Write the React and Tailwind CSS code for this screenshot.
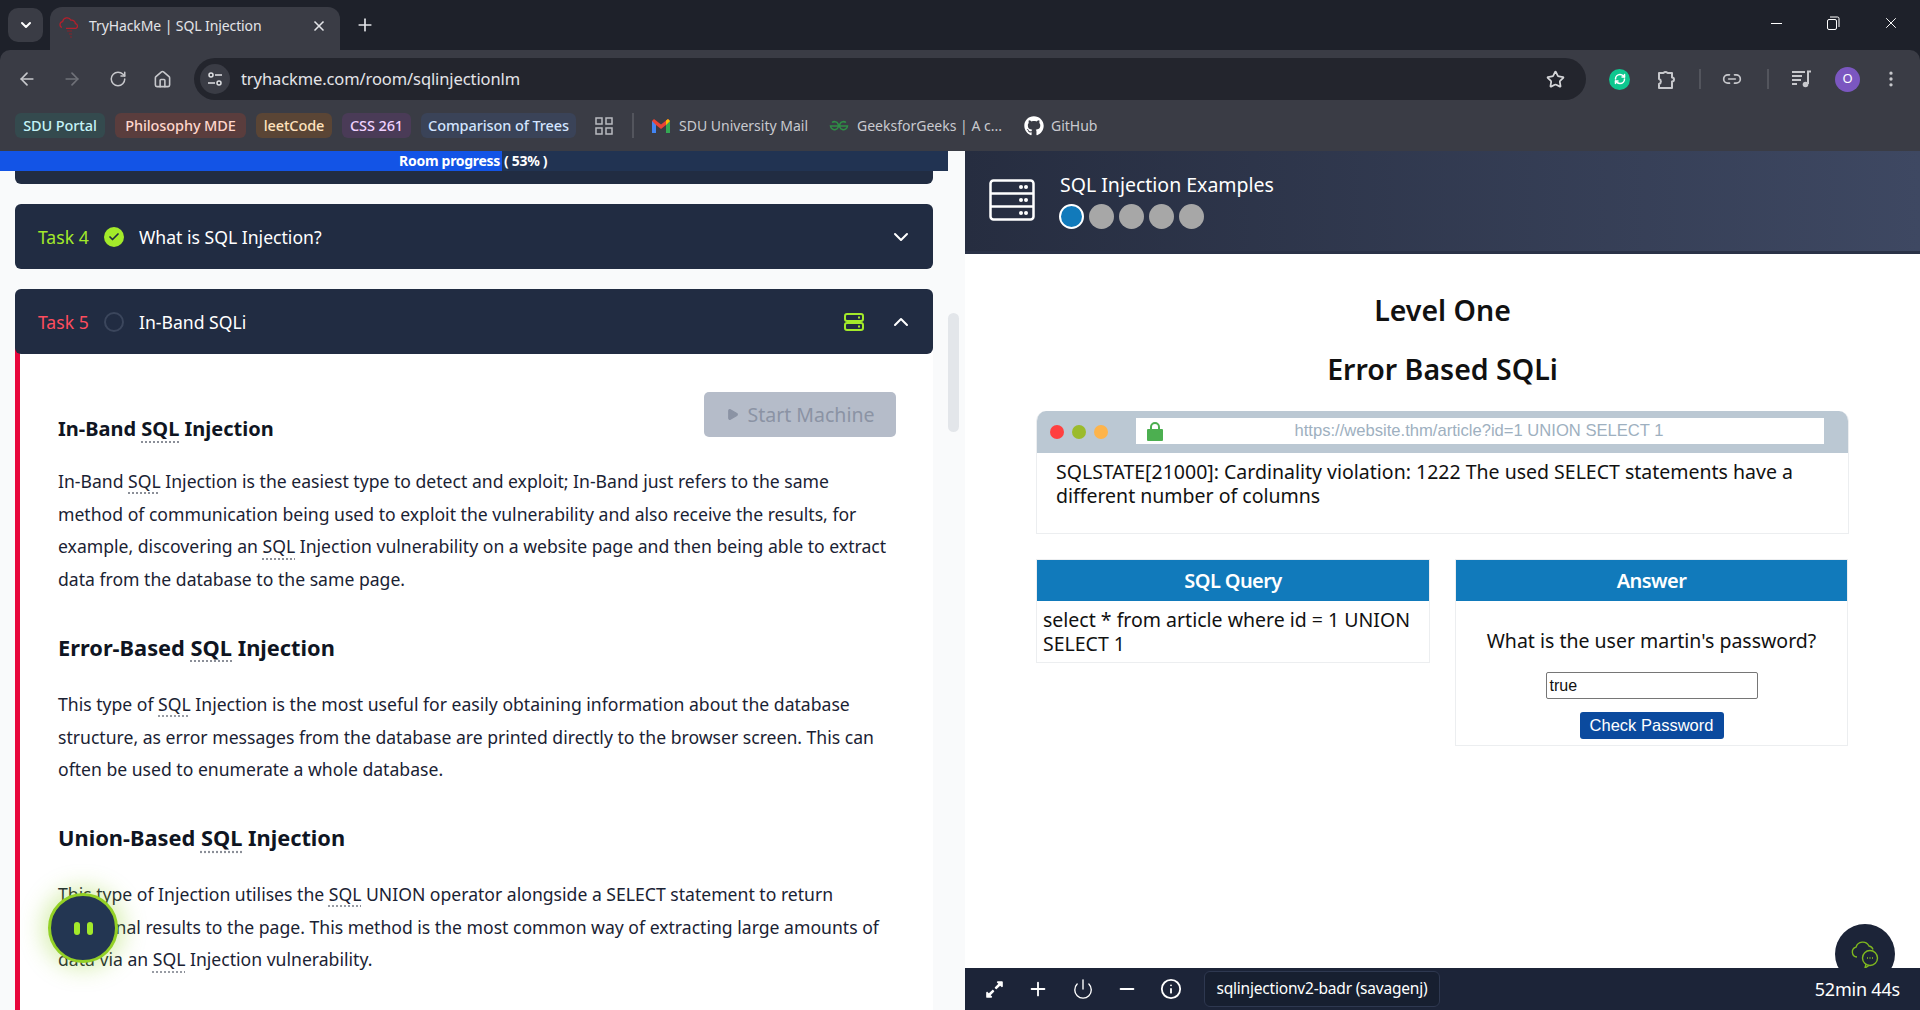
import React from 'react';
import {
    ArrowLeft, ArrowRight, RotateCw, RefreshCw, House, Star, Link2, EllipsisVertical,
    Minus, Plus, X, ChevronDown, ChevronUp, Power, Info, Check, Play
} from 'lucide-react';
import { FaGithub, FaExpandAlt } from 'react-icons/fa';

const BOOKMARK_CHIPS = [
    { label: 'SDU Portal', className: 'w-[90px] bg-[#344a4e] text-[#c4f3f7]' },
    { label: 'Philosophy MDE', className: 'w-[131px] bg-[#5a3d3d] text-[#ffd6cc]' },
    { label: 'leetCode', className: 'w-[76px] bg-[#5a4535] text-[#ffe2bd]' },
    { label: 'CSS 261', className: 'w-[69px] bg-[#4a3b57] text-[#f0d2ff]' },
    { label: 'Comparison of Trees', className: 'w-[155px] bg-[#3a4358] text-[#d3e5ff]' },
];

const Sql = () => (
    <span className="underline decoration-dotted decoration-[#8b8f98] underline-offset-[5px]">SQL</span>
);

const TaskHeader = ({ label, labelClass, title, done, open }) => (
    <div className="relative z-10 mx-[15px] flex h-[65px] w-[918px] items-center rounded-[6px] bg-[#212c42] pl-[23px] pr-[20px]">
        <span className={`w-[66px] pt-[2px] text-[17.600px] ${labelClass}`}>{label}</span>
        {done ? (
            <span className="flex h-5 w-5 items-center justify-center rounded-full bg-[#a3ea2a]">
                <Check className="h-3 w-3 text-[#212c42]" strokeWidth={3.5} />
            </span>
        ) : (
            <span className="h-5 w-5 rounded-full border-2 border-[#3b465c]" />
        )}
        <span className="ml-[15px] flex-1 pt-[2px] text-[17.600px] text-white">{title}</span>
        {open && (
            <svg width="22" height="20" viewBox="0 0 22 20" fill="none" stroke="#a3ea2a" strokeWidth="2" className="mr-[24px]">
                <rect x="2" y="2" width="18" height="7" rx="2" />
                <rect x="2" y="11" width="18" height="7" rx="2" />
                <path d="M15 5.500h2M15 14.500h2" />
            </svg>
        )}
        {open ? <ChevronUp className="h-6 w-6 text-white" /> : <ChevronDown className="h-6 w-6 text-white" />}
    </div>
);

const Heading = ({ children, first }) => (
    <h3 className={`font-bold leading-[30px] text-[#0f1522] ${first ? 'mb-[21px] text-[20px]' : 'mb-[25px] mt-[37px] text-[21.800px]'}`}>
        {children}
    </h3>
);

const Para = ({ children }) => <p className="text-[17.600px] leading-[32.7px] text-[#1a2233]">{children}</p>;

const ChromeTopBar = () => (
    <div className="flex h-[50px] shrink-0 items-end bg-[#1e212a] pl-2">
        <div className="mb-2 flex h-[34px] w-[35px] items-center justify-center rounded-[10px] bg-[#3a3c45]">
            <ChevronDown className="h-4 w-4 text-white" strokeWidth={3} />
        </div>
        <div className="ml-[7px] flex h-[43px] w-[290px] items-center rounded-t-[12px] bg-[#3a3c45] pb-[6px] pl-[8px] pr-[13px]">
            <svg width="22" height="24" viewBox="0 0 22 24" fill="none" stroke="#b3202c" strokeWidth="1.300">
                <path d="M4 13.500a3 3 0 0 1 .6-5.800 4.500 4.500 0 0 1 8.400-1.500 3.600 3.600 0 0 1 4.400 3.500 2.400 2.400 0 0 1 .6 4.600H8" />
                <path d="M9 17h5M11 20h3M12 23h2" stroke="#6d2b33" />
            </svg>
            <span className="ml-[9px] flex-1 text-[14px] tracking-[-0.1px] text-[#e3e4e8]">TryHackMe | SQL Injection</span>
            <X className="h-4 w-4 text-[#e3e4e8]" strokeWidth={2.5} />
        </div>
        <Plus className="mb-[15px] ml-[15px] h-5 w-5 text-[#e3e4e8]" />
        <div className="mb-[18px] ml-auto flex items-center pr-[20px]">
            <span className="h-px w-[11px] bg-white" />
            <svg width="14" height="14" viewBox="0 0 14 14" fill="none" stroke="white" strokeWidth="1" className="ml-[44px]">
                <rect x="1.500" y="3.500" width="9" height="10" rx="1.500" />
                <path d="M4 1h7.500a1.500 1.500 0 0 1 1.500 1.500V11" />
            </svg>
            <X className="ml-[42px] h-[18px] w-[18px] text-white" strokeWidth={1.3} />
        </div>
    </div>
);

const ChromeToolbar = () => (
    <div className="flex h-[50px] shrink-0 items-center rounded-t-[10px] bg-[#3a3c45] pl-[17px] pt-[8px]">
        <ArrowLeft className="h-5 w-5 text-[#c7c8cc]" />
        <ArrowRight className="ml-[25px] h-5 w-5 text-[#6f7178]" />
        <RotateCw className="ml-[27px] h-[18px] w-[18px] text-[#c7c8cc]" />
        <House className="ml-[26px] h-[19px] w-[19px] text-[#c7c8cc]" />
        <div className="ml-[22px] flex h-[42px] w-[1392px] items-center rounded-full bg-[#23252d] pl-[6px] pr-[21px]">
            <span className="flex h-[30px] w-[30px] items-center justify-center rounded-full bg-[#3a3c45]">
                <svg width="16" height="16" viewBox="0 0 16 16" fill="none" stroke="#dfe0e3" strokeWidth="1.500">
                    <circle cx="4" cy="4" r="2" />
                    <path d="M8 4h7M1 12h7" />
                    <circle cx="12" cy="12" r="2" />
                </svg>
            </span>
            <span className="ml-[11px] flex-1 text-[16.500px] tracking-[-0.1px] text-[#e3e4e8]">tryhackme.com/room/sqlinjectionlm</span>
            <Star className="h-[19px] w-[19px] text-[#d5d6d9]" strokeWidth={2.2} />
        </div>
        <span className="ml-[23px] flex h-[21px] w-[21px] items-center justify-center rounded-full bg-[#0fc78f]">
            <RefreshCw className="h-3 w-3 text-white" strokeWidth={3} />
        </span>
        <svg width="20" height="22" viewBox="0 0 20 22" fill="none" stroke="#c7c8cc" strokeWidth="2" className="ml-[26px]">
            <path d="M3 5h4.500a2.500 2.500 0 0 1 4 0H16v4.500a2 2 0 0 1 0 4V20H3v-4a2.600 2.600 0 0 0 0-5z" strokeLinejoin="round" />
        </svg>
        <span className="ml-[23px] h-5 w-0.5 bg-[#53555d]" />
        <Link2 className="ml-[21px] h-5 w-5 text-[#c7c8cc]" />
        <span className="ml-[25px] h-5 w-0.5 bg-[#53555d]" />
        <svg width="20" height="18" viewBox="0 0 20 18" fill="none" stroke="#c7c8cc" strokeWidth="2" className="ml-[23px]">
            <path d="M0 2h13M0 6h10M0 10h9M0 14h5" />
            <path d="M16 14V1.500h3" />
            <circle cx="13.500" cy="14.500" r="2.800" fill="#c7c8cc" stroke="none" />
        </svg>
        <span className="ml-[23px] flex h-[25px] w-[25px] items-center justify-center rounded-full bg-[#7b57c0] text-[13px] text-white">O</span>
        <EllipsisVertical className="ml-[21px] h-5 w-5 text-[#c7c8cc]" />
    </div>
);

const BookmarkBar = () => (
    <div className="flex h-[51px] shrink-0 items-center bg-[#3a3c45] pl-[15px] text-[14px]">
        <div className="flex items-center gap-[10px]">
            {BOOKMARK_CHIPS.map((chip) => (
                <span key={chip.label} className={`flex h-[25px] items-center justify-center rounded-[6px] text-[14.500px] font-medium tracking-[-0.1px] ${chip.className}`}>
                    {chip.label}
                </span>
            ))}
        </div>
        <svg width="18" height="18" viewBox="0 0 18 18" fill="none" stroke="#b9bac0" strokeWidth="1.500" className="ml-[19px]">
            <rect x="1" y="1" width="6" height="6" />
            <rect x="11" y="1" width="6" height="6" />
            <rect x="1" y="11" width="6" height="6" />
            <rect x="11" y="11" width="6" height="6" />
        </svg>
        <span className="ml-[19px] h-[25px] w-0.5 bg-[#53555d]" />
        <svg width="18" height="14" viewBox="0 0 18 14" className="ml-[18px]">
            <path d="M0 2v12h4V6l5 4 5-4v8h4V2L16 0 9 5.500 2 0z" fill="#ea4335" />
            <path d="M0 2v12h4V6z" fill="#4285f4" />
            <path d="M14 6v8h4V2z" fill="#34a853" />
            <path d="M18 2l-2-2-2 1.600V6z" fill="#fbbc04" />
        </svg>
        <span className="ml-[9px] text-[#c9cacf]">SDU University Mail</span>
        <svg width="20" height="12" viewBox="0 0 20 12" fill="none" stroke="#2f8d46" strokeWidth="1.500" className="ml-[21px]">
            <path d="M10 6h8.500a4 4 0 1 1-1.500-3.500M10 6H1.500a4 4 0 1 0 1.500-3.500" />
        </svg>
        <span className="ml-[8px] text-[#c9cacf]">GeeksforGeeks | A c...</span>
        <FaGithub className="ml-[22px] h-[20px] w-[20px] text-white" />
        <span className="ml-[7px] text-[#c9cacf]">GitHub</span>
    </div>
);

const LeftPanel = () => (
    <div className="relative h-full w-[965px] shrink-0 overflow-hidden bg-[#f9fafb]">
        <div className="flex h-5 w-[948px] bg-[#213352] text-[14px] font-bold leading-5 tracking-[-0.3px] text-white">
            <div className="w-[502px] bg-[#1354e6] pr-[2px] text-right">Room progress</div>
            <div className="pl-[2px]">( 53% )</div>
        </div>
        <div className="mx-[15px] h-[13px] w-[918px] rounded-b-[6px] bg-[#212c42]" />

        <div className="mt-5">
            <TaskHeader label="Task 4" labelClass="text-[#a3ea2a]" title="What is SQL Injection?" done />
        </div>
        <div className="mt-5">
            <TaskHeader label="Task 5" labelClass="text-[#ff4d5e]" title="In-Band SQLi" open />
        </div>

        <div className="mx-[15px] -mt-[6px] w-[918px] border-l-[5px] border-[#e8073c] bg-white pb-[100px] pl-[38px] pr-[37px] pt-[44px]">
            <button className="float-right flex h-[45px] w-[192px] items-center justify-center gap-[9px] rounded-[5px] bg-[#b5bcc9] text-[19.500px] text-[#8b93a4]">
                <Play className="h-[13px] w-[13px] fill-[#8b93a4] text-[#8b93a4]" />
                Start Machine
            </button>
            <div className="pt-[22px]">
                <Heading first>In-Band <Sql /> Injection</Heading>
            </div>
            <Para>
                In-Band <Sql /> Injection is the easiest type to detect and exploit; In-Band just refers to the same<br />
                method of communication being used to exploit the vulnerability and also receive the results, for<br />
                example, discovering an <Sql /> Injection vulnerability on a website page and then being able to extract<br />
                data from the database to the same page.
            </Para>
            <Heading>Error-Based <Sql /> Injection</Heading>
            <Para>
                This type of <Sql /> Injection is the most useful for easily obtaining information about the database<br />
                structure, as error messages from the database are printed directly to the browser screen. This can<br />
                often be used to enumerate a whole database.
            </Para>
            <Heading>Union-Based <Sql /> Injection</Heading>
            <Para>
                This type of Injection utilises the <Sql /> UNION operator alongside a SELECT statement to return<br />
                additional results to the page. This method is the most common way of extracting large amounts of<br />
                data via an <Sql /> Injection vulnerability.
            </Para>
        </div>

        {/* scrollbar thumb */}
        <div className="absolute left-[948px] top-[162px] h-[119px] w-[11px] rounded-full bg-[#e3e6ea]" />

        {/* paused bubble */}
        <div className="absolute left-[48px] top-[742px] z-20 flex h-[70px] w-[70px] items-center justify-center gap-[7px] rounded-full border-[3px] border-[#93d126] bg-[#233652] shadow-[0_0_22px_6px_rgba(147,209,38,0.35)]">
            <span className="h-[13px] w-[6px] rounded-full bg-[#a3ea2a]" />
            <span className="h-[13px] w-[6px] rounded-full bg-[#a3ea2a]" />
        </div>
    </div>
);

const RightPanel = () => (
    <div className="relative flex h-full flex-1 flex-col overflow-hidden bg-white text-[#111]">
        <div className="flex h-[103px] shrink-0 items-center border-b-[3px] border-[#2a3247] bg-gradient-to-r from-[#262d40] to-[#3e4862] pb-[1px] pl-[24px]">
            <svg width="46" height="42" viewBox="0 0 46 42" fill="none" stroke="white" strokeWidth="2.500" className="-mt-[2px]">
                <rect x="1.500" y="1.500" width="43" height="39" rx="3" />
                <path d="M1.500 14.500h43M1.500 27.500h43" />
                <g fill="white" stroke="none">
                    <circle cx="32" cy="8" r="2" /><circle cx="37" cy="8" r="2" />
                    <circle cx="32" cy="21" r="2" /><circle cx="37" cy="21" r="2" />
                    <circle cx="32" cy="34" r="2" /><circle cx="37" cy="34" r="2" />
                </g>
            </svg>
            <div className="ml-[25px]">
                <div className="text-[19.500px] leading-6 text-white">SQL Injection Examples</div>
                <div className="-ml-[1px] mt-[7px] flex gap-[5px]">
                    <span className="h-[25px] w-[25px] rounded-full border-2 border-white bg-[#117abb]" />
                    <span className="h-[25px] w-[25px] rounded-full bg-[#a7a7a7]" />
                    <span className="h-[25px] w-[25px] rounded-full bg-[#a7a7a7]" />
                    <span className="h-[25px] w-[25px] rounded-full bg-[#a7a7a7]" />
                    <span className="h-[25px] w-[25px] rounded-full bg-[#a7a7a7]" />
                </div>
            </div>
        </div>

        <div className="flex-1 px-[71px]">
            <h2 className="mt-[37px] text-center text-[28.500px] font-semibold leading-[38px]">Level One</h2>
            <h2 className="mt-[21px] text-center text-[28.500px] font-semibold leading-[38px]">Error Based SQLi</h2>

            <div className="mt-[23px] h-[123px] overflow-hidden rounded-t-[10px] border border-t-0 border-[#eceef0]">
                <div className="flex h-[42px] items-center bg-[#bbc8d3] pl-[13px]">
                    <span className="h-[14px] w-[14px] rounded-full bg-[#ff4040]" />
                    <span className="ml-[8px] h-[14px] w-[14px] rounded-full bg-[#9bbb2c]" />
                    <span className="ml-[8px] h-[14px] w-[14px] rounded-full bg-[#fdb44b]" />
                    <div className="relative mb-[2px] ml-[28px] flex h-[26px] w-[688px] items-center justify-center bg-white font-['Liberation_Sans',sans-serif] text-[16.600px] text-[#9eb0c0]">
                        <svg width="18" height="20" viewBox="0 0 18 20" fill="none" className="absolute left-[10px]">
                            <path d="M5 9V6a4 4 0 0 1 8 0v3" stroke="#4caf50" strokeWidth="2" />
                            <rect x="1" y="8" width="16" height="12" rx="1" fill="#4caf50" />
                        </svg>
                        <span className="pr-[2px]">https://website.thm/article?id=1 UNION SELECT 1</span>
                    </div>
                </div>
                <p className="px-[19px] pt-[7px] text-[19.500px] leading-6">
                    SQLSTATE[21000]: Cardinality violation: 1222 The used SELECT statements have a<br />
                    different number of columns
                </p>
            </div>

            <div className="mt-[25px] flex items-start gap-[25px]">
                <div className="w-[394px] border border-[#eceef0]">
                    <div className="h-[41px] bg-[#117abb] text-center text-[20px] font-semibold leading-[41px] tracking-[-0.6px] text-white">SQL Query</div>
                    <p className="px-[6px] pb-[6px] pt-[7px] text-[19.500px] leading-6">
                        select * from article where id = 1 UNION<br />
                        SELECT 1
                    </p>
                </div>
                <div className="flex h-[187px] w-[393px] flex-col items-center border border-[#eceef0]">
                    <div className="h-[41px] w-full bg-[#117abb] text-center text-[20px] font-semibold leading-[41px] tracking-[-0.6px] text-white">Answer</div>
                    <p className="mt-[28px] text-[19.500px] leading-6">What is the user martin's password?</p>
                    <div className="mt-[19px] flex h-[27px] w-[212px] items-center rounded-[2px] border border-[#767676] pl-[3px] font-['Liberation_Sans',sans-serif] text-[16px]">true</div>
                    <button className="mt-[13px] h-[27px] w-[144px] rounded-[3px] bg-[#0b4a9e] font-['Liberation_Sans',sans-serif] text-[16.500px] text-white">Check Password</button>
                </div>
            </div>
        </div>

        {/* chat button sits behind the bottom bar */}
        <div className="absolute left-[870px] top-[773px] flex h-[60px] w-[60px] items-start justify-center rounded-full bg-[#1c2438] pt-[16px]">
            <svg width="32" height="30" viewBox="0 0 32 30" fill="none" stroke="#7fb81f" strokeWidth="1.400">
                <path d="M8 17a5 5 0 0 1-1-9.800 7 7 0 0 1 13-1.200 5 5 0 0 1 4 3.500" />
                <circle cx="21" cy="18" r="7.500" />
                <path d="M17 24l-1 4 4-2.600" />
                <path d="M18 18h.8M20.600 18h.8M23.200 18h.8" strokeWidth="2" />
            </svg>
        </div>

        <div className="relative flex h-[42px] shrink-0 items-center bg-[#1c2438] pl-[20px] pr-[20px] text-white">
            <FaExpandAlt className="h-[19px] w-[19px]" />
            <Plus className="ml-[23px] h-[22px] w-[22px]" />
            <Power className="ml-[23px] h-[22px] w-[22px]" strokeWidth={1.5} />
            <Minus className="ml-[22px] h-[22px] w-[22px]" />
            <Info className="ml-[22px] h-[22px] w-[22px]" />
            <span className="ml-[22px] flex h-[36px] w-[236px] items-center justify-center rounded-[6px] border border-[#2e3850] bg-[#171f30] text-[15.500px] tracking-[-0.2px]">
                sqlinjectionv2-badr (savagenj)
            </span>
            <span className="ml-auto text-[18px] tracking-[-0.2px]">52min 44s</span>
        </div>
    </div>
);

export default function App() {
    return (
        <div className="flex h-[1010px] w-full flex-col overflow-hidden bg-[#1e212a] font-['Noto_Sans',sans-serif]">
            <ChromeTopBar />
            <ChromeToolbar />
            <BookmarkBar />
            <div className="flex min-h-0 flex-1">
                <LeftPanel />
                <RightPanel />
            </div>
        </div>
    );
}
